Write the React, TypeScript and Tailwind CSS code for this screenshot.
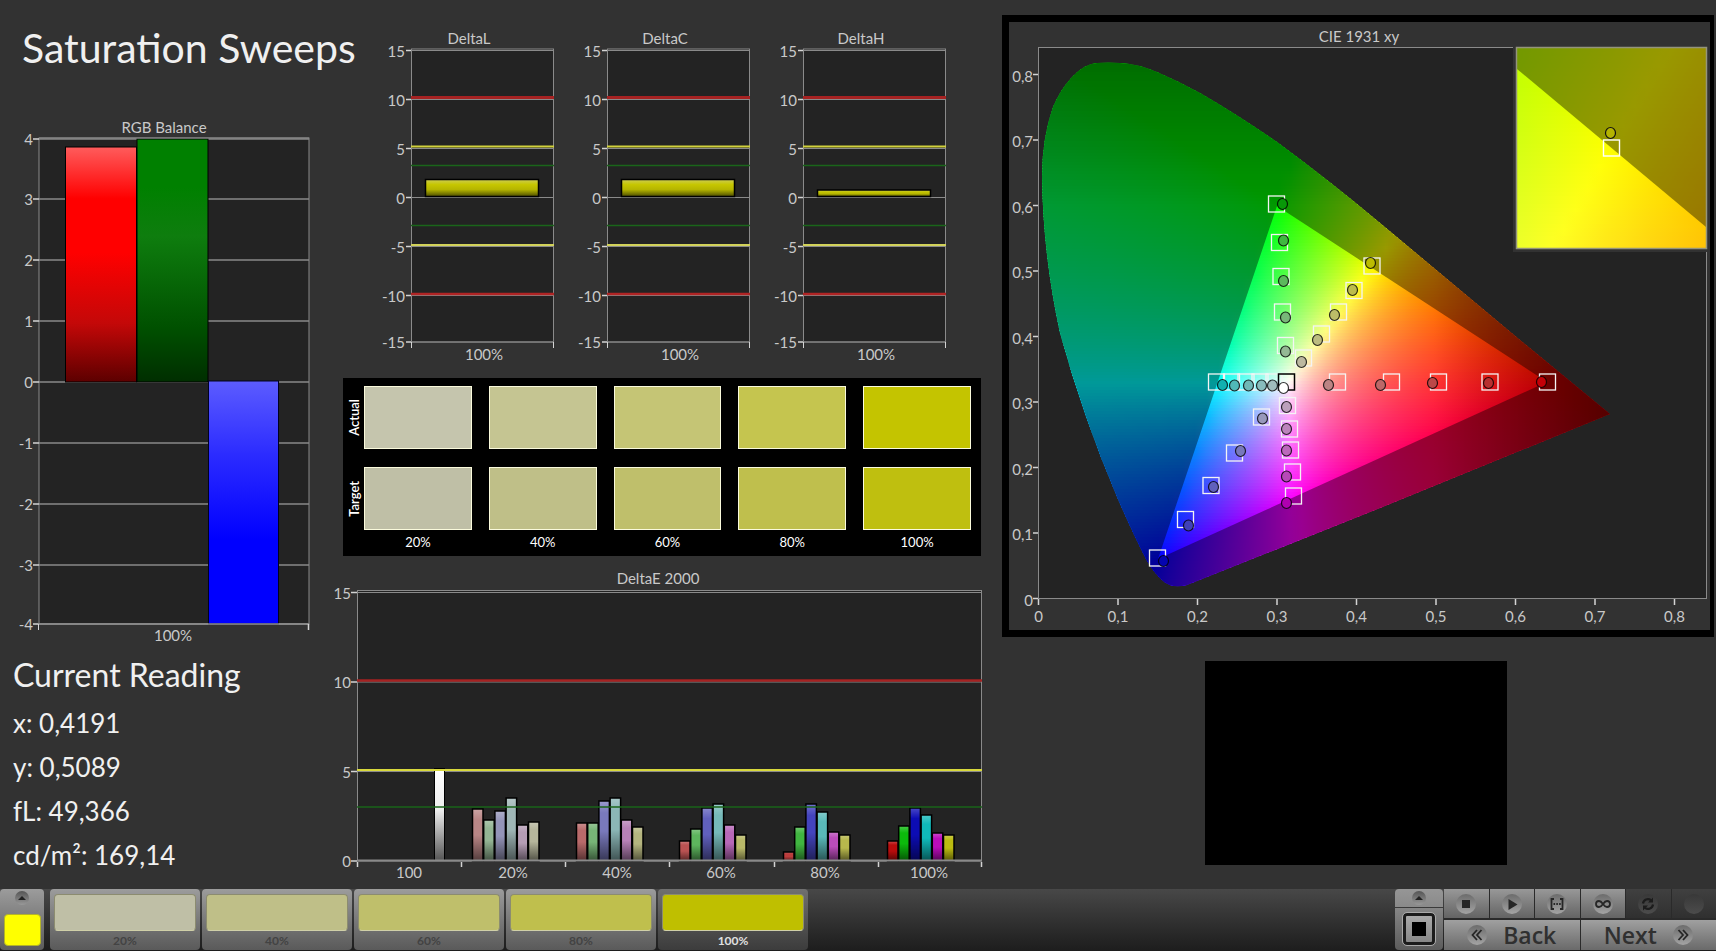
import type { ReactNode } from "react";
import clsx from "clsx";

type Point = [number, number];
type Marker = [number, number, string];

const GRID = "#8a8a8a";
const TICK = "#d4d4d4";
const PLOT_BG = "#232323";

const levels = ["20%", "40%", "60%", "80%", "100%"];
const actualColors = ["#c5c5ad", "#c5c592", "#c5c575", "#c5c54f", "#c4c400"];
const targetColors = ["#bfbfa6", "#bfbf88", "#bfbf6b", "#bfbf4d", "#bfbf0f"];
const patternColors = ["#bfbfa6", "#bfbf88", "#bfbf6b", "#bfbf4d", "#bfbf00"];

const readings = ["x: 0,4191", "y: 0,5089", "fL: 49,366", "cd/m²: 169,14"];

interface LabelProps {
  x: number;
  y: number;
  anchor?: "start" | "middle" | "end";
  children: ReactNode;
}

const Label = ({ x, y, anchor = "middle", children }: LabelProps) => (
  <text x={x} y={y} textAnchor={anchor} fill="#c9c9c9" className="text-[15px]">
    {children}
  </text>
);

const RgbBalance = () => {
  const yOf = (v: number) => 382 - v * 61;
  const values = [4, 3, 2, 1, 0, -1, -2, -3, -4];

  return (
    <svg viewBox="0 114 343 536" className="block w-full" role="img" aria-label="RGB Balance">
      <defs>
        <linearGradient id="barRed" x1="0" y1="0" x2="0" y2="1">
          <stop offset="0" stopColor="#ff5c5c" />
          <stop offset="0.22" stopColor="#ff0000" />
          <stop offset="0.45" stopColor="#ff0000" />
          <stop offset="0.75" stopColor="#c40808" />
          <stop offset="1" stopColor="#5c0000" />
        </linearGradient>
        <linearGradient id="barGreen" x1="0" y1="0" x2="0" y2="1">
          <stop offset="0" stopColor="#008000" />
          <stop offset="0.2" stopColor="#008000" />
          <stop offset="0.4" stopColor="#0e7d0e" />
          <stop offset="0.78" stopColor="#005000" />
          <stop offset="1" stopColor="#002e00" />
        </linearGradient>
        <linearGradient id="barBlue" x1="0" y1="0" x2="0" y2="1">
          <stop offset="0" stopColor="#5c5cff" />
          <stop offset="0.3" stopColor="#2c2cff" />
          <stop offset="0.65" stopColor="#0000ff" />
          <stop offset="1" stopColor="#0000ff" />
        </linearGradient>
      </defs>
      <Label x={164} y={133}>RGB Balance</Label>
      <rect x="39" y="138" width="270" height="486" fill={PLOT_BG} stroke={GRID} />
      {values.map((v) => {
        const y = v === -4 ? 624 : yOf(v) + (v === 4 ? 1 : 0);
        return (
          <g key={v}>
            <line x1="39" x2="309" y1={y} y2={y} stroke={GRID} strokeWidth="1.5" />
            <line x1="33" x2="39" y1={y} y2={y} stroke={TICK} strokeWidth="1.5" />
            <Label x={33} y={y + 6} anchor="end">{v}</Label>
          </g>
        );
      })}
      <rect x="65.5" y="147" width="71" height="235" fill="url(#barRed)" stroke="#000" />
      <rect x="137" y="139" width="71" height="243" fill="url(#barGreen)" stroke="#000" />
      <rect x="208.5" y="381" width="70" height="243" fill="url(#barBlue)" stroke="#000022" />
      <line x1="39" x2="309" y1="138" y2="138" stroke={GRID} />
      <line x1="38" x2="309" y1="624" y2="624" stroke={GRID} strokeWidth="1.5" />
      <line x1="38.5" x2="38.5" y1="624" y2="630" stroke={TICK} />
      <line x1="308.5" x2="308.5" y1="624" y2="630" stroke={TICK} strokeWidth="1.5" />
      <Label x={173} y={641}>100%</Label>
    </svg>
  );
};

interface DeltaChartProps {
  title: string;
  barTop: number;
}

const limits: [number, string, number][] = [
  [97.5, "#a62222", 3],
  [146.5, "#d2d23c", 2],
  [165.5, "#1a651a", 1.5],
  [225.5, "#1a651a", 1.5],
  [245, "#d2d25a", 2],
  [294, "#b02424", 2.5],
];

const DeltaChart = ({ title, barTop }: DeltaChartProps) => {
  const gradientId = `bar${title}`;

  return (
    <svg viewBox="0 0 196 366" className="block w-full" role="img" aria-label={title}>
      <defs>
        <linearGradient id={gradientId} x1="0" y1="0" x2="0" y2="1">
          <stop offset="0" stopColor="#cccc55" />
          <stop offset="0.3" stopColor="#c6c600" />
          <stop offset="0.6" stopColor="#b4b400" />
          <stop offset="1" stopColor="#4c4c00" />
        </linearGradient>
      </defs>
      <Label x={96} y={44}>{title}</Label>
      <rect x="38.5" y="49" width="142" height="293" fill={PLOT_BG} stroke={GRID} />
      {[15, 10, 5, 0, -5, -10, -15].map((v) => {
        const y = v === -15 ? 342 : 197.5 - v * 9.8;
        return (
          <g key={v}>
            <line x1="38" x2="181" y1={y} y2={y} stroke={GRID} />
            <line x1="33" x2="38" y1={y} y2={y} stroke={TICK} strokeWidth="1.5" />
            <Label x={32} y={y + 6} anchor="end">{v}</Label>
          </g>
        );
      })}
      {limits.map(([y, color, width]) => (
        <line key={y} x1="38" x2="181" y1={y} y2={y} stroke={color} strokeWidth={width} />
      ))}
      <rect
        x="52.5"
        y={barTop}
        width="113"
        height={196.5 - barTop}
        fill={`url(#${gradientId})`}
        stroke="#000"
        strokeWidth="1.5"
      />
      <line x1="38.5" x2="38.5" y1="342" y2="348" stroke={TICK} />
      <line x1="180.5" x2="180.5" y1="342" y2="348" stroke={TICK} />
      <Label x={111} y={360}>100%</Label>
    </svg>
  );
};

const SwatchRow = ({ name, colors }: { name: string; colors: string[] }) => (
  <>
    <span className="self-center justify-self-center rotate-180 text-[13px] font-semibold leading-4 text-white [writing-mode:vertical-rl]">
      {name}
    </span>
    {colors.map((color) => (
      <div key={color} className="h-[63px] border border-[#fafadc]" style={{ backgroundColor: color }} />
    ))}
  </>
);

const SwatchPanel = () => (
  <section className="mr-[21px] mt-3 h-[178px] bg-black pr-[10px] pt-2">
    <div className="-mr-[17px] grid grid-cols-[21px_repeat(5,1fr)] gap-y-[18px] [&>div]:mr-[17px]">
      <SwatchRow name="Actual" colors={actualColors} />
      <SwatchRow name="Target" colors={targetColors} />
    </div>
    <div className="-mr-[17px] grid grid-cols-[21px_repeat(5,1fr)] pt-1">
      <span />
      {levels.map((level) => (
        <span key={level} className="mr-[17px] text-center text-[13px] leading-4 text-white">
          {level}
        </span>
      ))}
    </div>
  </section>
);

// Bar tops are in chart units, ordered R, G, B, C, M, Y.
const deltaEGroups: { x: number; tops: number[]; colors: string[] }[] = [
  {
    x: 472,
    tops: [809, 820, 811, 798, 825, 822],
    colors: ["#b98686", "#94b594", "#9494b8", "#9fb6b6", "#b59db5", "#b5b59b"],
  },
  {
    x: 576,
    tops: [823, 823, 801, 798, 820, 827],
    colors: ["#b96a6a", "#77b577", "#7979bc", "#8bb6b6", "#b781b7", "#b5b57f"],
  },
  {
    x: 679,
    tops: [841, 829, 808, 804, 825, 835],
    colors: ["#ba5252", "#5db55d", "#6060bd", "#76b9b9", "#b868b8", "#b8b868"],
  },
  {
    x: 783,
    tops: [852, 827, 804, 812, 832, 835],
    colors: ["#bb3c3c", "#40b640", "#4444be", "#59b9b9", "#ba4cba", "#b8b84c"],
  },
  {
    x: 887,
    tops: [841, 826, 808, 815, 833, 835],
    colors: ["#b80c0c", "#0cba0c", "#0c0cb4", "#10baba", "#ba0cba", "#bbbb10"],
  },
];

const DeltaEChart = () => (
  <svg viewBox="323 556 679 333" className="block w-full" role="img" aria-label="DeltaE 2000">
    <defs>
      <linearGradient id="whiteBar" x1="0" y1="0" x2="0" y2="1">
        <stop offset="0" stopColor="#ffffff" />
        <stop offset="0.45" stopColor="#eeeeee" />
        <stop offset="1" stopColor="#555555" />
      </linearGradient>
      <linearGradient id="barShade" x1="0" y1="0" x2="0" y2="1">
        <stop offset="0" stopColor="#fff" stopOpacity="0.25" />
        <stop offset="0.2" stopColor="#fff" stopOpacity="0" />
        <stop offset="0.5" stopColor="#000" stopOpacity="0" />
        <stop offset="1" stopColor="#000" stopOpacity="0.55" />
      </linearGradient>
    </defs>
    <Label x={658} y={584}>DeltaE 2000</Label>
    <rect x="357.5" y="590.5" width="624" height="270" fill={PLOT_BG} stroke={GRID} />
    {[15, 10, 5, 0].map((v) => {
      const y = 861 - v * 17.9;
      return (
        <g key={v}>
          <line x1="357" x2="982" y1={y} y2={y} stroke={GRID} />
          <line x1="351" x2="357" y1={y} y2={y} stroke={TICK} strokeWidth="1.5" />
          <Label x={351} y={y + 6} anchor="end">{v}</Label>
        </g>
      );
    })}
    <rect x="434.5" y="768.5" width="10" height="92" fill="url(#whiteBar)" stroke="#000" />
    {deltaEGroups.map((group) =>
      group.tops.map((top, i) => {
        const box = { x: group.x + i * 11.2 + 0.5, y: top, width: 10.5, height: 861 - top };
        return (
          <g key={`${group.x}-${i}`}>
            <rect {...box} fill={group.colors[i]} />
            <rect {...box} fill="url(#barShade)" stroke="#000" strokeWidth="1.5" />
          </g>
        );
      }),
    )}
    <line x1="357" x2="982" y1="860.5" y2="860.5" stroke={GRID} strokeWidth="2" />
    <line x1="357" x2="982" y1="680.5" y2="680.5" stroke="#a62222" strokeWidth="2.5" />
    <line x1="357" x2="982" y1="770" y2="770" stroke="#d8d83c" strokeWidth="2" />
    <line x1="357" x2="982" y1="807" y2="807" stroke="#1a651a" strokeWidth="1.5" />
    {[357.5, 461.5, 565.5, 669.5, 774.5, 878.5, 981.5].map((x) => (
      <line key={x} x1={x} x2={x} y1="862" y2="867" stroke={TICK} strokeWidth="1.5" />
    ))}
    {["100", ...levels].map((name, i) => (
      <Label key={name} x={409 + i * 104} y={878}>{name}</Label>
    ))}
  </svg>
);

const clamp = (v: number) => Math.min(1, Math.max(0, v));

// Rec. 709 primaries, scaled so the strongest channel is full.
const chromaToColor = ([x, yRaw]: Point) => {
  const y = Math.max(yRaw, 0.005);
  const X = x / y;
  const Z = (1 - x - y) / y;
  const linear = [
    3.2406 * X - 1.5372 - 0.4986 * Z,
    -0.9689 * X + 1.8758 + 0.0415 * Z,
    0.0557 * X - 0.204 + 1.057 * Z,
  ];
  const max = Math.max(...linear);
  const falloff = (1 - Math.min(0.45, Math.max(0, (x - 0.5) * 2))) * (1 - Math.max(0, (y - 0.6) * 1.3));
  const [r, g, b] = linear.map((c) => Math.round(255 * falloff * Math.pow(clamp(c / max), 0.8)));
  return `rgb(${r},${g},${b})`;
};

interface SpectrumProps {
  id: string;
  x: number;
  y: number;
  width: number;
  height: number;
  strip: number;
  stops: number;
  toChroma: (x: number, y: number) => Point;
}

const Spectrum = ({ id, x, y, width, height, strip, stops, toChroma }: SpectrumProps) => {
  const rows = Array.from({ length: Math.ceil(height / strip) }, (_, i) => y + i * strip);
  const offsets = Array.from({ length: stops + 1 }, (_, i) => i / stops);

  return (
    <>
      {rows.map((top, row) => (
        <g key={top}>
          <linearGradient id={`${id}${row}`}>
            {offsets.map((o) => (
              <stop key={o} offset={o} stopColor={chromaToColor(toChroma(x + o * width, top + strip / 2))} />
            ))}
          </linearGradient>
          <rect x={x} y={top} width={width} height={strip + 1} fill={`url(#${id}${row})`} />
        </g>
      ))}
    </>
  );
};

const LOCUS =
  "M1610 414 L1380 508 L1187 585 Q1172 589 1163 581 Q1154 573 1147 561 Q1133 534 1117 497 Q1083 417 1060 333 Q1043 255 1042 177 Q1042 138 1053 107 Q1060 90 1072 77 Q1084 64 1097 63 Q1108 62 1120 63 Q1139 64 1157 72 Q1178 81 1200 93 Q1238 115 1277 142 Q1330 181 1380 223 L1520 340 Z";
const GAMUT = "M1277 206 L1547 382 L1158 559 Z";

const targets: Point[] = [
  [1276.5, 204], [1279.5, 242.5], [1281, 276.5], [1282.5, 312], [1285.5, 345.5],
  [1372, 266], [1354, 290.5], [1338.5, 312], [1321.5, 334], [1303.5, 358],
  [1216.5, 382], [1231.5, 382], [1246, 382], [1260, 382], [1274, 382],
  [1337.5, 382], [1391.5, 382], [1438.5, 382], [1490, 382], [1547.5, 382],
  [1287.5, 405.5], [1289.5, 429], [1290.5, 450], [1292.5, 472], [1293.5, 496],
  [1261.5, 417], [1234.5, 453], [1211, 485.5], [1185.5, 519.5], [1157.5, 558],
];

const measured: Marker[] = [
  [1282.5, 204, "#089808"], [1283.5, 240.5, "#40b840"], [1283.5, 281, "#5cb85c"],
  [1285.5, 317.5, "#78b878"], [1285.5, 351.5, "#94b894"],
  [1370.5, 263, "#bcbc00"], [1352.5, 290, "#bcbc4c"], [1334.5, 315, "#bcbc68"],
  [1317.5, 340, "#bcbc80"], [1301.5, 362, "#bcb8a0"],
  [1222.5, 385, "#10b0b0"], [1234.5, 385.5, "#50b8b8"], [1248.5, 385.5, "#70b8b8"],
  [1261.5, 385.5, "#88bcbc"], [1272.5, 385.5, "#a0bcbc"],
  [1328.5, 385, "#bc8484"], [1380.5, 385, "#bc6868"], [1432.5, 383, "#bc4848"],
  [1488.5, 383, "#b83030"], [1541.5, 382, "#c40008"],
  [1286.5, 407, "#bca0bc"], [1286.5, 429, "#bc84bc"], [1286.5, 450.5, "#bc68bc"],
  [1286.5, 476.5, "#b848b8"], [1286.5, 503, "#b000b0"],
  [1262.5, 418.5, "#9898bc"], [1240.5, 451, "#7878bc"], [1213.5, 487, "#6060bc"],
  [1188.5, 525.5, "#4040b8"], [1163.5, 561, "#0404b0"],
  [1283.5, 388, "#ffffff"],
];

const axisTicks = [0, 1, 2, 3, 4, 5, 6, 7, 8];
const axisName = (v: number) => (v === 0 ? "0" : `0,${v}`);

const CieChart = () => (
  <svg viewBox="1009 22 701 608" className="block w-full" role="img" aria-label="CIE 1931 xy">
    <defs>
      <clipPath id="locusClip">
        <path d={LOCUS} />
      </clipPath>
      <clipPath id="insetClip">
        <rect x="1517" y="48" width="189" height="200" />
      </clipPath>
    </defs>
    <Label x={1359} y={42}>CIE 1931 xy</Label>
    <rect x="1038.5" y="47.5" width="668" height="551" fill={PLOT_BG} stroke={GRID} />
    <g clipPath="url(#locusClip)">
      <Spectrum
        id="locusRow"
        x={1038}
        y={60}
        width={576}
        height={530}
        strip={3}
        stops={48}
        toChroma={(px, py) => [(px - 1038.5) / 794.5, (598.5 - py) / 654.5]}
      />
      <path d={`${LOCUS} ${GAMUT}`} fillRule="evenodd" fill="#000" fillOpacity="0.4" />
    </g>
    {axisTicks.map((v) => {
      const x = 1038.5 + v * 79.5;
      const y = 598.5 - v * 65.5;
      return (
        <g key={v}>
          <line x1={x} x2={x} y1="599" y2="605" stroke={TICK} strokeWidth="1.5" />
          <line x1="1033" x2="1038" y1={y} y2={y} stroke={TICK} strokeWidth="1.5" />
          <Label x={x} y={622}>{axisName(v)}</Label>
          <Label x={1033} y={y + 7} anchor="end">{axisName(v)}</Label>
        </g>
      );
    })}
    {targets.map(([x, y]) => (
      <rect key={`${x}-${y}`} x={x - 8} y={y - 8} width="16" height="16" fill="none" stroke="#f4f4f4" strokeWidth="1.3" />
    ))}
    <rect x="1278.5" y="374" width="16" height="16" fill="none" stroke="#000" strokeWidth="1.5" />
    {measured.map(([x, y, color]) => (
      <ellipse key={`${x}-${y}`} cx={x} cy={y} rx="5" ry="5.5" fill={color} stroke="#000" strokeOpacity="0.8" strokeWidth="1.2" />
    ))}

    <rect x="1513" y="46" width="197" height="206" fill="#323232" />
    <g clipPath="url(#insetClip)">
      <Spectrum
        id="insetRow"
        x={1517}
        y={48}
        width={189}
        height={200}
        strip={4}
        stops={16}
        toChroma={(px, py) => [0.4193 + (px - 1611) * 0.00026, 0.5053 - (py - 148) * 0.00025]}
      />
      <path d="M1517 69 L1706 227 V48 H1517 Z" fill="#000" fillOpacity="0.4" />
    </g>
    <rect x="1516.5" y="47.5" width="190" height="201" fill="none" stroke="#94947c" strokeWidth="1.5" />
    <ellipse cx="1610.5" cy="133" rx="5" ry="5.5" fill="#b4b400" stroke="#111" strokeWidth="1.2" />
    <rect x="1603.5" y="140" width="16" height="16" fill="none" stroke="#fff" strokeWidth="1.4" />
  </svg>
);

const Disc = ({ dim, children }: { dim?: boolean; children?: ReactNode }) => (
  <span
    className={clsx(
      "flex size-5 items-center justify-center rounded-full bg-linear-to-b",
      dim ? "from-[#383838] to-[#4c4c4c]" : "from-[#6c6c6c] to-[#a4a4a4]",
    )}
  >
    <svg viewBox="0 0 20 20" className="size-5" fill="none" stroke="#262626" strokeWidth="1.8">
      {children}
    </svg>
  </span>
);

const UpArrow = () => (
  <span className="flex size-[14px] items-center justify-center rounded-full bg-linear-to-b from-[#555] to-[#999]">
    <svg viewBox="0 0 14 14" className="size-[14px]">
      <path d="M3 9 L7 5 L11 9 Z" fill="#222" />
    </svg>
  </span>
);

const tools: { name: string; dim?: boolean; icon?: ReactNode }[] = [
  { name: "Stop", icon: <rect x="6" y="6" width="8" height="8" fill="#262626" stroke="none" /> },
  { name: "Play", icon: <path d="M6.5 5 L15.5 10.5 L6.5 16 Z" fill="#262626" stroke="none" /> },
  {
    name: "Read series",
    icon: (
      <>
        <path d="M7 5 H4.5 V15 H7 M13 5 H15.5 V15 H13" />
        <path d="M6.5 10 H14" strokeDasharray="1.6 1.2" />
      </>
    ),
  },
  {
    name: "Read continuously",
    icon: (
      <path d="M10 10 C8.5 7.8 7.4 7 6 7 A3 3 0 0 0 6 13 C7.4 13 8.5 12.2 10 10 C11.5 7.8 12.6 7 14 7 A3 3 0 0 1 14 13 C12.6 13 11.5 12.2 10 10 Z" />
    ),
  },
  {
    name: "Refresh",
    dim: true,
    icon: (
      <g stroke="#1c1c1c" strokeWidth="2.2">
        <path d="M5 9.5 A5 5 0 0 1 13 6.2 M15 10.5 A5 5 0 0 1 7 13.8" />
        <path d="M15 3.5 V8.5 H10 Z M5 16.5 V11.5 H10 Z" fill="#1c1c1c" stroke="none" />
      </g>
    ),
  },
  { name: "Record", dim: true },
];

const navStyles =
  "flex items-center justify-center gap-4 bg-linear-to-b from-[#a0a0a0] to-[#6a6a6a] font-['Open_Sans',sans-serif] text-[23px] leading-[30px] font-semibold text-[#303030]";

const Toolbar = () => (
  <footer className="flex h-[62px] items-stretch bg-linear-to-b from-[#484848] to-[#1d1d1d] pb-px">
    <button
      aria-label="Pattern color"
      className="mr-[6px] flex w-11 flex-col items-center justify-between rounded bg-linear-to-b from-[#9c9c9c] to-[#5c5c5c] pb-1 pt-[2px]"
    >
      <UpArrow />
      <span className="h-8 w-[37px] rounded-sm border border-[#b4b428] bg-[#ffff00]" />
    </button>
    <div className="flex gap-[2px]">
      {levels.map((level, i) => {
        const selected = i === levels.length - 1;
        return (
          <button
            key={level}
            className={clsx(
              "flex w-[150px] flex-col items-center rounded bg-linear-to-b px-1 pt-[5px]",
              selected ? "from-[#707070] to-[#3c3c3c]" : "from-[#9c9c9c] to-[#5a5a5a]",
            )}
          >
            <span
              className="h-[37px] w-full rounded border border-[#8c8c70] border-b-[#d0d0a8]"
              style={{ backgroundColor: patternColors[i] }}
            />
            <span
              className={clsx(
                "pt-[2px] text-[12px] leading-4 font-bold",
                selected ? "text-[#e0e0e0]" : "text-[#434343]",
              )}
            >
              {level}
            </span>
          </button>
        );
      })}
    </div>
    <div className="ml-auto flex">
      <div className="mr-px flex w-12 flex-col gap-px">
        <button
          aria-label="Expand"
          className="flex h-[18px] items-center justify-center rounded-t bg-linear-to-b from-[#969696] to-[#8a8a8a]"
        >
          <UpArrow />
        </button>
        <button
          aria-label="Pattern window"
          className="flex flex-1 items-center justify-center rounded-b bg-linear-to-b from-[#868686] to-[#5c5c5c]"
        >
          <span className="flex size-8 items-center justify-center rounded border-3 border-[#1c1c1c] bg-linear-to-b from-[#aaa] to-[#888] outline outline-[#aaa]">
            <span className="size-[14px] bg-black" />
          </span>
        </button>
      </div>
      <div className="flex w-[272px] flex-col gap-[2px] bg-[#2a2a2a]">
        <div className="grid h-[29px] grid-cols-6 gap-px">
          {tools.map((tool) => (
            <button
              key={tool.name}
              aria-label={tool.name}
              className={clsx(
                "flex items-center justify-center bg-linear-to-b",
                tool.dim ? "from-[#404040] to-[#303030]" : "from-[#989898] to-[#646464]",
              )}
            >
              <Disc dim={tool.dim}>{tool.icon}</Disc>
            </button>
          ))}
        </div>
        <div className="grid flex-1 grid-cols-2 gap-px">
          <button className={navStyles}>
            <Disc>
              <path d="M10 5 L5.5 10 L10 15 M14.5 5 L10 10 L14.5 15" />
            </Disc>
            Back
          </button>
          <button className={navStyles}>
            Next
            <Disc>
              <path d="M5.5 5 L10 10 L5.5 15 M10 5 L14.5 10 L10 15" />
            </Disc>
          </button>
        </div>
      </div>
    </div>
  </footer>
);

export default function App() {
  return (
    <div className="flex min-h-screen flex-col bg-[#323232] font-['Lato','Liberation_Sans',sans-serif] text-[#f0f0f0]">
      <main className="grid flex-1 grid-cols-[minmax(0,323fr)_minmax(0,679fr)_minmax(0,714fr)] items-start">
        <div>
          <h1 className="h-[114px] whitespace-nowrap pl-[22px] pt-6 text-[41px] leading-[48px]">
            Saturation Sweeps
          </h1>
          <div className="-mr-5">
            <RgbBalance />
          </div>
          <section className="pl-[13px] pt-[7px]">
            <h2 className="mb-2 text-[32px] leading-9">Current Reading</h2>
            {readings.map((reading) => (
              <p key={reading} className="text-[26px] leading-[44px]">
                {reading}
              </p>
            ))}
          </section>
        </div>

        <div>
          <div className="grid grid-cols-3 pl-[50px] pr-[41px]">
            <DeltaChart title="DeltaL" barTop={179.5} />
            <DeltaChart title="DeltaC" barTop={179.5} />
            <DeltaChart title="DeltaH" barTop={190} />
          </div>
          <div className="pl-5">
            <SwatchPanel />
          </div>
          <DeltaEChart />
        </div>

        <div className="pt-[15px]">
          <div className="mr-[2px] border-y-7 border-l-7 border-r-4 border-black">
            <CieChart />
          </div>
          <div className="ml-[203px] mt-6 h-[204px] w-[302px] bg-black" />
        </div>
      </main>
      <Toolbar />
    </div>
  );
}
